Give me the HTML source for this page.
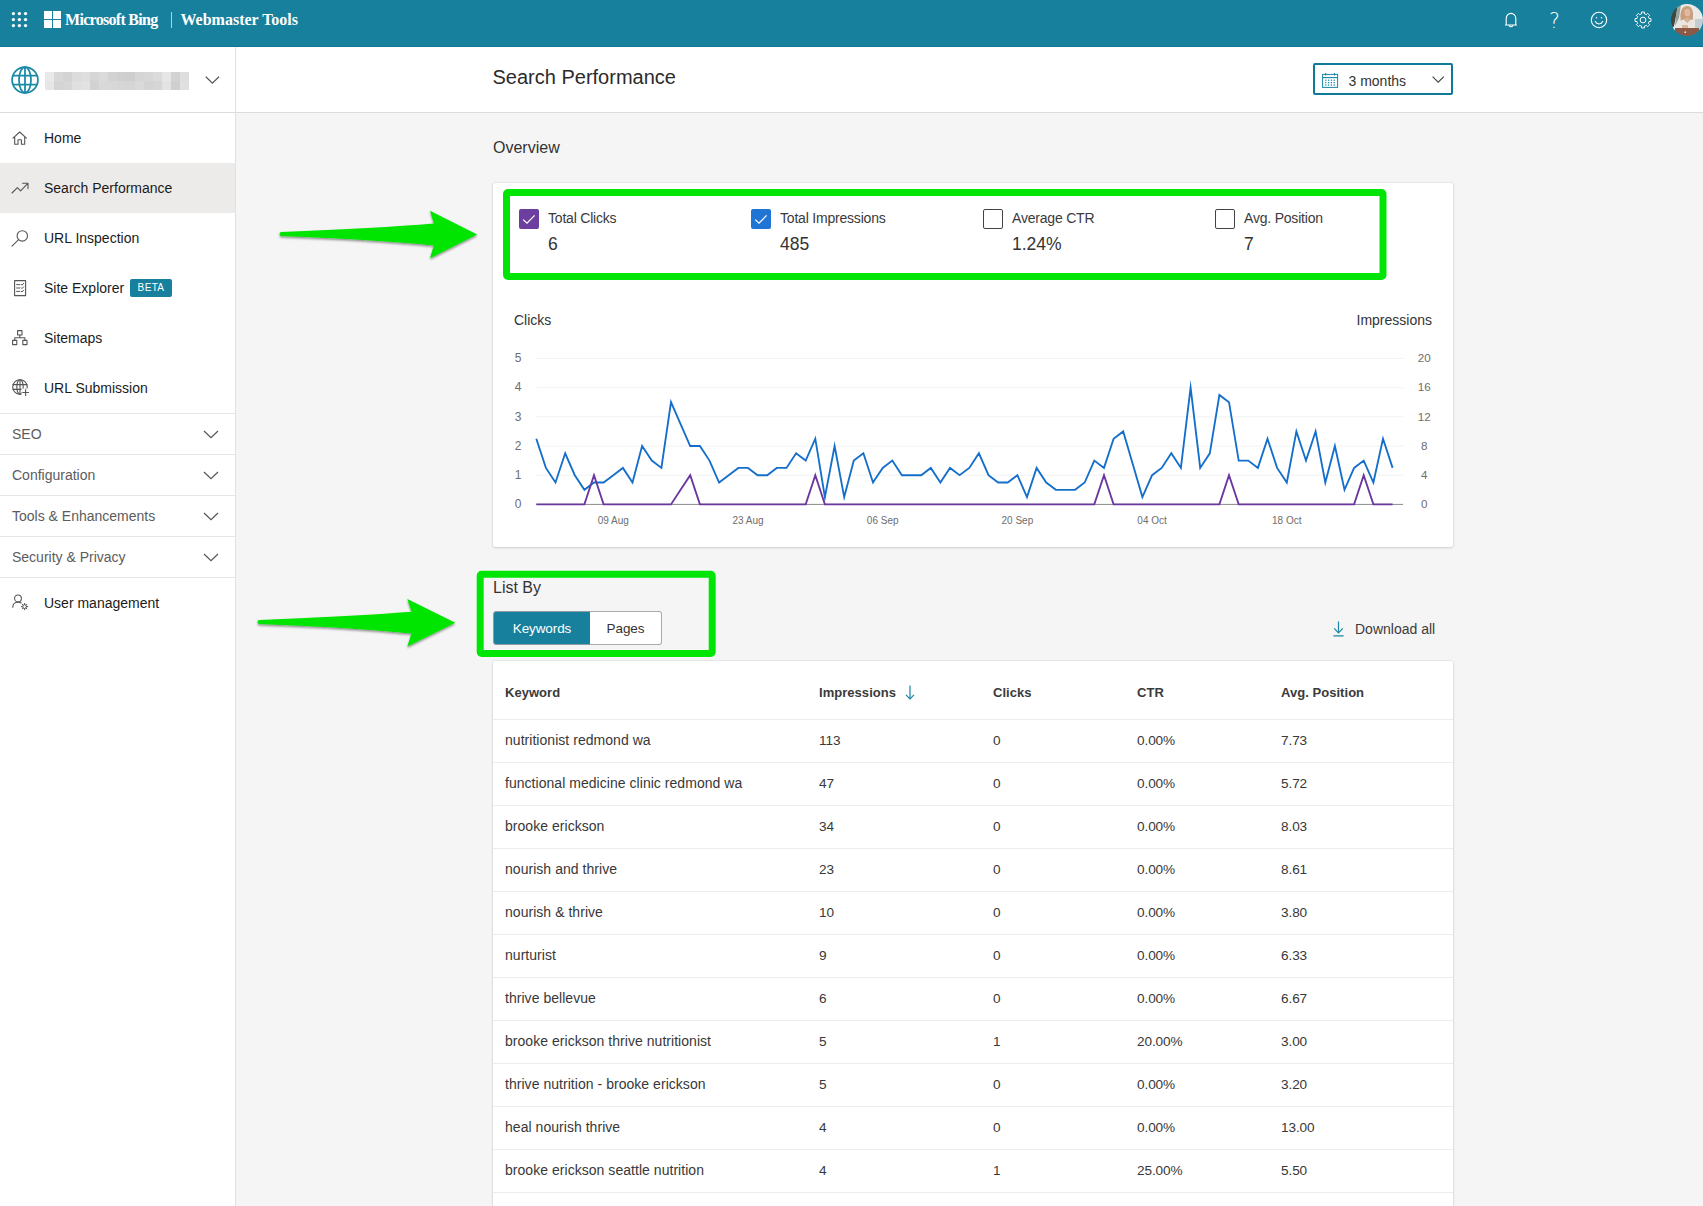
<!DOCTYPE html>
<html lang="en">
<head>
<meta charset="utf-8">
<title>Search Performance - Bing Webmaster Tools</title>
<style>
*{box-sizing:border-box;margin:0;padding:0}
html,body{width:1703px;height:1206px;overflow:hidden;background:#f5f5f5;font-family:"Liberation Sans",sans-serif;color:#222}
.abs{position:absolute}
#hdr{position:absolute;left:0;top:0;width:1703px;height:47px;background:#17809d;border-bottom:1px solid #0d7591}
#side{position:absolute;left:0;top:47px;width:236px;height:1159px;background:#fff;border-right:1px solid #e1e1e1}
#tbar{position:absolute;left:236px;top:47px;width:1467px;height:66px;background:#fff;border-bottom:1px solid #dcdcdc}
.card{position:absolute;background:#fff;border-radius:2px;box-shadow:0 0 0 1px rgba(0,0,0,.04),0 1px 3px rgba(0,0,0,.12)}

#hdr .t{position:absolute;top:-4px;height:47px;line-height:47px;color:#fff;font-family:"Liberation Serif",serif;font-weight:bold;font-size:16px;white-space:nowrap}
#hdr svg{position:absolute;overflow:visible}


#side{font-size:14px}
#side .sel{position:absolute;left:0;top:116px;width:235px;height:50px;background:#edebe9}
#side .ni{position:absolute;left:44px;height:50px;line-height:50px;color:#1b1b1b;white-space:nowrap}
#side .sec{position:absolute;left:12px;height:40px;line-height:40px;color:#5c5c5c;white-space:nowrap}
#side .hr{position:absolute;left:0;width:235px;height:1px;background:#e6e6e6}
#side svg{position:absolute;overflow:visible}
#side .beta{position:absolute;left:130px;top:232px;width:42px;height:18px;line-height:18px;background:#17809d;color:#fff;font-size:10px;text-align:center;border-radius:2px;letter-spacing:.35px}


#tbar .ttl{position:absolute;left:256.5px;top:15px;font-size:20px;line-height:30px;color:#2b2b2b;white-space:nowrap}
#dd{position:absolute;left:1077px;top:16px;width:140px;height:32px;border:2px solid #0f7a98;border-radius:2px;background:#fff}
#dd .tx{position:absolute;left:33.5px;top:0;height:28px;line-height:33px;font-size:14px;color:#333}
#dd svg{position:absolute;overflow:visible}
#main{position:absolute;left:0;top:0;width:1703px;height:1206px;pointer-events:none}
#main .h{position:absolute;left:493px;font-size:16px;line-height:20px;color:#333;white-space:nowrap}
.cb{position:absolute;width:20px;height:20px;border-radius:2px}
.cb.off{border:1px solid #444;background:#fff}
.ml{position:absolute;margin-top:.4px;font-size:14px;line-height:18px;color:#3a3a3a;white-space:nowrap;letter-spacing:-.2px}
.mv{position:absolute;font-size:17.5px;line-height:22px;color:#333;white-space:nowrap}
#chart{position:absolute;left:493px;top:300px;overflow:visible}
#chart text{font-family:"Liberation Sans",sans-serif}
.seg{position:absolute;top:611px;height:34px;line-height:34px;font-size:13.5px;text-align:center;border:1px solid #a9a9a9;letter-spacing:-.1px}
#tbl{position:absolute;left:493px;top:661px;width:960px;height:560px}
#tbl .r{position:absolute;left:0;width:960px;height:43px;border-top:1px solid #ececec;font-size:14px;line-height:40px;color:#383838}
#tbl .r .c2,#tbl .r .c3,#tbl .r .c4,#tbl .r .c5{font-size:13.6px;line-height:41px;letter-spacing:-.1px}
#tbl .hd{position:absolute;left:0;top:0;width:960px;height:58px;line-height:63px;font-size:13px;font-weight:bold;color:#3a3a3a}
#tbl span{position:absolute;top:0;white-space:nowrap;letter-spacing:.04px}
#tbl .c1{left:12px}#tbl .c2{left:326px}#tbl .c3{left:500px}#tbl .c4{left:644px}#tbl .c5{left:788px}

</style>
</head>
<body>
<div id="hdr">

<svg style="left:0;top:0" width="40" height="40"><g fill="#fff">
<circle cx="13.4" cy="13.6" r="1.65"/><circle cx="19.4" cy="13.6" r="1.65"/><circle cx="25.5" cy="13.6" r="1.65"/>
<circle cx="13.4" cy="19.6" r="1.65"/><circle cx="19.4" cy="19.6" r="1.65"/><circle cx="25.5" cy="19.6" r="1.65"/>
<circle cx="13.4" cy="25.6" r="1.65"/><circle cx="19.4" cy="25.6" r="1.65"/><circle cx="25.5" cy="25.6" r="1.65"/>
</g></svg>
<svg style="left:44px;top:11px" width="17" height="17"><g fill="#fff"><rect x="0" y="0" width="8" height="8"/><rect x="9" y="0" width="8" height="8"/><rect x="0" y="9" width="8" height="8"/><rect x="9" y="9" width="8" height="8"/></g></svg>
<div class="t" id="msb" style="left:65px;letter-spacing:-0.7px">Microsoft Bing</div>
<div style="position:absolute;left:171px;top:12px;width:1px;height:16px;background:rgba(255,255,255,.65)"></div>
<div class="t" id="wmt" style="left:180.5px">Webmaster Tools</div>
<!-- bell -->
<svg style="left:1503px;top:11px" width="16" height="18" fill="none" stroke="#fff" stroke-width="1.1" stroke-linecap="round" stroke-linejoin="round">
<path d="M3.2 13.9 V7.2 a4.8 4.8 0 0 1 9.6 0 V13.9 M2.5 14 H13.5"/><path d="M6.2 14.6 a1.9 1.7 0 0 0 3.6 0"/></svg>
<!-- help -->
<div id="qm" style="position:absolute;left:1545px;top:8px;width:19px;height:26px;line-height:26px;text-align:center;color:#fff;font-family:'DejaVu Sans','Liberation Sans',sans-serif;font-weight:200;font-size:20.5px">?</div>
<!-- smile -->
<svg style="left:1590px;top:11px" width="18" height="18" fill="none" stroke="#fff" stroke-width="1.1" stroke-linecap="round">
<circle cx="9" cy="9" r="7.7"/><path d="M5.3 10.6 a4.1 4.1 0 0 0 7.4 0"/><circle cx="6.5" cy="6.8" r=".75" fill="#fff" stroke="none"/><circle cx="11.5" cy="6.8" r=".75" fill="#fff" stroke="none"/></svg>
<!-- gear -->
<svg style="left:1633.7px;top:11.1px" width="18" height="18" viewBox="-9 -9 18 18" fill="none" stroke="#fff" stroke-width="1" stroke-linejoin="round">
<path d="M-1.49 -6.02 L-1.47 -7.86 A8.0 8.0 0 0 1 1.47 -7.86 L1.49 -6.02 A6.2 6.2 0 0 1 3.20 -5.31 L4.52 -6.60 A8.0 8.0 0 0 1 6.60 -4.52 L5.31 -3.20 A6.2 6.2 0 0 1 6.02 -1.49 L7.86 -1.47 A8.0 8.0 0 0 1 7.86 1.47 L6.02 1.49 A6.2 6.2 0 0 1 5.31 3.20 L6.60 4.52 A8.0 8.0 0 0 1 4.52 6.60 L3.20 5.31 A6.2 6.2 0 0 1 1.49 6.02 L1.47 7.86 A8.0 8.0 0 0 1 -1.47 7.86 L-1.49 6.02 A6.2 6.2 0 0 1 -3.20 5.31 L-4.52 6.60 A8.0 8.0 0 0 1 -6.60 4.52 L-5.31 3.20 A6.2 6.2 0 0 1 -6.02 1.49 L-7.86 1.47 A8.0 8.0 0 0 1 -7.86 -1.47 L-6.02 -1.49 A6.2 6.2 0 0 1 -5.31 -3.20 L-6.60 -4.52 A8.0 8.0 0 0 1 -4.52 -6.60 L-3.20 -5.31 A6.2 6.2 0 0 1 -1.49 -6.02Z"/><circle cx="0" cy="0" r="2.9"/></svg>
<!-- avatar -->
<svg style="left:1671px;top:4px" width="32" height="32" viewBox="0 0 32 32">
<defs><clipPath id="avc"><circle cx="16" cy="16" r="16"/></clipPath><filter id="avb" x="-10%" y="-10%" width="120%" height="120%"><feGaussianBlur stdDeviation=".55"/></filter></defs>
<g clip-path="url(#avc)"><g filter="url(#avb)"><rect width="32" height="32" fill="#e9e9e7"/>
<path d="M0 0H7L5 12L3 22L0 26Z" fill="#3c4a3f"/>
<path d="M5 12L7 0H10L8 14L4 22Z" fill="#9aa39a"/>
<path d="M9.5 14C9 6 12 2 16 2C20.5 2 22.5 6 22 13C22 16 21 18 20 19L11 19C10 18 9.5 16 9.5 14Z" fill="#c79f7c"/>
<ellipse cx="16.3" cy="8.6" rx="3" ry="3.9" fill="#e2b9a0"/>
<path d="M6 32C6 21 9 15.5 13 15.5L16.3 19L19.5 15.5C23.5 15.5 26 21 26 32Z" fill="#ece6e0"/>
<path d="M13.5 14L16.3 19L19 14Z" fill="#dcb199"/>
<rect x="24" y="15" width="8" height="11" fill="#c5ccd2"/>
<path d="M4 24H28V32H4Z" fill="#8b5a46"/>
<rect x="11" y="21" width="6" height="3" fill="#d9b6a0"/>
<circle cx="14.3" cy="28.2" r=".9" fill="#e6e0dc"/>
</g></g></svg>

</div>
<div id="side">

<!-- site selector -->
<svg style="left:11px;top:19px" width="28" height="28" viewBox="-14 -14 28 28" fill="none" stroke="#1a8aa6" stroke-width="1.75">
<circle r="12.9"/><ellipse rx="6" ry="12.9"/><path d="M0 -12.9V12.9M-12.1 -4.5H12.1M-12.1 4.5H12.1"/></svg>
<svg style="left:45px;top:25px" width="145" height="18" shape-rendering="crispEdges">
<rect x="0" y="0" width="9.1" height="9" fill="#e9e9e9"/><rect x="0" y="9" width="9.1" height="9" fill="#e6e6e6"/><rect x="9" y="0" width="9.1" height="9" fill="#d8d8d8"/><rect x="9" y="9" width="9.1" height="9" fill="#d4d4d4"/><rect x="18" y="0" width="9.1" height="9" fill="#d3d3d3"/><rect x="18" y="9" width="9.1" height="9" fill="#d6d6d6"/><rect x="27" y="0" width="9.1" height="9" fill="#dcdcdc"/><rect x="27" y="9" width="9.1" height="9" fill="#dfdfdf"/><rect x="36" y="0" width="9.1" height="9" fill="#dedede"/><rect x="36" y="9" width="9.1" height="9" fill="#e2e2e2"/><rect x="45" y="0" width="9.1" height="9" fill="#d6d6d6"/><rect x="45" y="9" width="9.1" height="9" fill="#d2d2d2"/><rect x="54" y="0" width="9.1" height="9" fill="#dadada"/><rect x="54" y="9" width="9.1" height="9" fill="#d9d9d9"/><rect x="63" y="0" width="9.1" height="9" fill="#d2d2d2"/><rect x="63" y="9" width="9.1" height="9" fill="#d8d8d8"/><rect x="72" y="0" width="9.1" height="9" fill="#cfcfcf"/><rect x="72" y="9" width="9.1" height="9" fill="#d6d6d6"/><rect x="81" y="0" width="9.1" height="9" fill="#cecece"/><rect x="81" y="9" width="9.1" height="9" fill="#d5d5d5"/><rect x="90" y="0" width="9.1" height="9" fill="#d5d5d5"/><rect x="90" y="9" width="9.1" height="9" fill="#d9d9d9"/><rect x="99" y="0" width="9.1" height="9" fill="#d7d7d7"/><rect x="99" y="9" width="9.1" height="9" fill="#d4d4d4"/><rect x="108" y="0" width="9.1" height="9" fill="#dbdbdb"/><rect x="108" y="9" width="9.1" height="9" fill="#d6d6d6"/><rect x="117" y="0" width="9.1" height="9" fill="#e6e6e6"/><rect x="117" y="9" width="9.1" height="9" fill="#e3e3e3"/><rect x="126" y="0" width="9.1" height="9" fill="#d2d2d2"/><rect x="126" y="9" width="9.1" height="9" fill="#cfcfcf"/><rect x="135" y="0" width="9.1" height="9" fill="#dedede"/><rect x="135" y="9" width="9.1" height="9" fill="#e0e0e0"/>
</svg>
<svg style="left:205px;top:29px" width="15" height="9" fill="none" stroke="#555" stroke-width="1.2"><path d="M.8 .8 L7.4 7.2 L14 .8"/></svg>
<div class="hr" style="top:65px;background:#dcdcdc"></div>

<div class="sel"></div>
<!-- home -->
<svg style="left:12px;top:84px" width="16" height="15" fill="none" stroke="#555" stroke-width="1.1" stroke-linejoin="round" stroke-linecap="round"><path d="M1 7.2 L7.7 1 L14.4 7.2 M2.7 6 V13.3 H6 V8.8 H9.4 V13.3 H12.7 V6"/></svg>
<div class="ni" style="top:66px">Home</div>
<!-- trend -->
<svg style="left:11px;top:135px" width="18" height="13" fill="none" stroke="#555" stroke-width="1.1" stroke-linejoin="round" stroke-linecap="round"><path d="M1 11 L6.4 5.6 L9.6 8.8 L16.6 1.6 M11.6 1.2 H17 V6.6"/></svg>
<div class="ni" style="top:116px">Search Performance</div>
<!-- magnifier -->
<svg style="left:11px;top:183px" width="18" height="17" fill="none" stroke="#555" stroke-width="1.1" stroke-linejoin="round" stroke-linecap="round"><circle cx="11.3" cy="5.9" r="5.2"/><path d="M7.6 9.7 L1 16.2"/></svg>
<div class="ni" style="top:166px">URL Inspection</div>
<!-- site explorer doc -->
<svg style="left:14px;top:233px" width="13" height="17" fill="none" stroke="#555" stroke-width="1.1" stroke-linejoin="round" stroke-linecap="round" stroke-linecap="butt"><rect x=".6" y=".6" width="11" height="15"/><path d="M2.6 4.6H5.8M2.6 8H5.8M2.6 11.4H5.8M7.2 4.4L8 5.2L9.6 3.4M7.2 7.8L8 8.6L9.6 6.8M7.2 11.2L8 12L9.6 10.2" stroke-width="1"/></svg>
<div class="ni" style="top:216px">Site Explorer</div>
<div class="beta">BETA</div>
<!-- sitemaps -->
<svg style="left:12px;top:283px" width="16" height="16" fill="none" stroke="#555" stroke-width="1.1" stroke-linejoin="round" stroke-linecap="round" stroke-linejoin="miter"><rect x="5.6" y=".6" width="4.4" height="4.4"/><rect x=".6" y="10.4" width="4.2" height="4.2"/><rect x="10.8" y="10.4" width="4.2" height="4.2"/><path d="M7.8 5V7.8M2.7 10.4V7.8H12.9V10.4"/></svg>
<div class="ni" style="top:266px">Sitemaps</div>
<!-- url submission -->
<svg style="left:12px;top:332px" width="17" height="17" viewBox="-8 -8 17 17" fill="none" stroke="#555" stroke-width="1.1" stroke-linejoin="round" stroke-linecap="round"><circle r="7.3"/><ellipse rx="3.2" ry="7.3"/><path d="M-7 -2.4H7M-7 2.4H7M0 -7.3V7.3"/><rect x="1.5" y="1.5" width="8" height="8" fill="#fff" stroke="none"/><path d="M5.6 2.6V8.4M2.7 5.5H8.5"/></svg>
<div class="ni" style="top:316px">URL Submission</div>

<div class="hr" style="top:366px"></div>
<div class="sec" style="top:367px">SEO</div><svg style="left:203px;top:383px" width="16" height="9" fill="none" stroke="#555" stroke-width="1.2"><path d="M1 1 L8 7.6 L15 1"/></svg>
<div class="hr" style="top:407px"></div>
<div class="sec" style="top:408px">Configuration</div><svg style="left:203px;top:424px" width="16" height="9" fill="none" stroke="#555" stroke-width="1.2"><path d="M1 1 L8 7.6 L15 1"/></svg>
<div class="hr" style="top:448px"></div>
<div class="sec" style="top:449px">Tools &amp; Enhancements</div><svg style="left:203px;top:465px" width="16" height="9" fill="none" stroke="#555" stroke-width="1.2"><path d="M1 1 L8 7.6 L15 1"/></svg>
<div class="hr" style="top:489px"></div>
<div class="sec" style="top:490px">Security &amp; Privacy</div><svg style="left:203px;top:506px" width="16" height="9" fill="none" stroke="#555" stroke-width="1.2"><path d="M1 1 L8 7.6 L15 1"/></svg>
<div class="hr" style="top:530px"></div>
<!-- user mgmt -->
<svg style="left:12px;top:547px" width="17" height="17" fill="none" stroke="#555" stroke-width="1.1" stroke-linejoin="round" stroke-linecap="round"><circle cx="6" cy="4.4" r="3.4"/><path d="M.8 13.2 C.8 9.8 3 8.2 6 8.2 C7.4 8.2 8.4 8.5 9.2 9"/><g stroke-width="1"><circle cx="12.6" cy="12.6" r="1.9"/><path d="M12.6 9.4V10.4M12.6 14.8V15.8M9.4 12.6H10.4M14.8 12.6H15.8M10.3 10.3L11 11M14.2 14.2L14.9 14.9M14.9 10.3L14.2 11M11 14.2L10.3 14.9"/></g></svg>
<div class="ni" style="top:531px">User management</div>

</div>
<div id="tbar">

<div class="ttl">Search Performance</div>
<div id="dd">
<svg style="left:7px;top:7px" width="17" height="16" fill="none" stroke="#1a87a4" stroke-width="1">
<rect x=".6" y="2.4" width="15" height="13"/><path d="M.6 5.6H15.6" stroke-width="1.1"/><path d="M3.7 .9V3.6M12.5 .9V3.6" stroke-width="1.1"/>
<g fill="#1a87a4" stroke="none"><rect x="3.2" y="7.6" width="1.25" height="1.25"/><rect x="6.0" y="7.6" width="1.25" height="1.25"/><rect x="8.8" y="7.6" width="1.25" height="1.25"/><rect x="11.6" y="7.6" width="1.25" height="1.25"/><rect x="3.2" y="10.0" width="1.25" height="1.25"/><rect x="6.0" y="10.0" width="1.25" height="1.25"/><rect x="8.8" y="10.0" width="1.25" height="1.25"/><rect x="11.6" y="10.0" width="1.25" height="1.25"/><rect x="3.2" y="12.4" width="1.25" height="1.25"/><rect x="6.0" y="12.4" width="1.25" height="1.25"/><rect x="8.8" y="12.4" width="1.25" height="1.25"/><rect x="11.6" y="12.4" width="1.25" height="1.25"/></g></svg>
<div class="tx">3 months</div>
<svg style="left:117px;top:11px" width="13" height="8" fill="none" stroke="#444" stroke-width="1.15"><path d="M.6 .6 L6.2 6.1 L11.8 .6"/></svg>
</div>

</div>
<div id="main">

<div class="h" style="top:138px">Overview</div>
<div class="card" style="left:493px;top:183px;width:960px;height:364px"></div>

<div class="cb" style="left:519px;top:209px;background:#6b3ea0"><svg width="20" height="20" fill="none" stroke="#fff" stroke-width="1.3" style="position:absolute;left:0;top:0"><path d="M4.2 10.6 L8 14.2 L15.6 6.4"/></svg></div>
<div class="ml" style="left:548px;top:209px">Total Clicks</div><div class="mv" style="left:548px;top:233px">6</div>
<div class="cb" style="left:751px;top:209px;background:#2074d4"><svg width="20" height="20" fill="none" stroke="#fff" stroke-width="1.3" style="position:absolute;left:0;top:0"><path d="M4.2 10.6 L8 14.2 L15.6 6.4"/></svg></div>
<div class="ml" style="left:780px;top:209px">Total Impressions</div><div class="mv" style="left:780px;top:233px">485</div>
<div class="cb off" style="left:983px;top:209px"></div>
<div class="ml" style="left:1012px;top:209px">Average CTR</div><div class="mv" style="left:1012px;top:233px">1.24%</div>
<div class="cb off" style="left:1215px;top:209px"></div>
<div class="ml" style="left:1244px;top:209px">Avg. Position</div><div class="mv" style="left:1244px;top:233px">7</div>

<svg id="chart" width="960" height="247">
<text x="21" y="25" font-size="14" fill="#333">Clicks</text>
<text x="939" y="25" font-size="14" fill="#333" text-anchor="end">Impressions</text>
<line x1="43.5" x2="910" y1="175.2" y2="175.2" stroke="#f2f2f2" stroke-width="1"/><line x1="43.5" x2="910" y1="146.0" y2="146.0" stroke="#f2f2f2" stroke-width="1"/><line x1="43.5" x2="910" y1="116.8" y2="116.8" stroke="#f2f2f2" stroke-width="1"/><line x1="43.5" x2="910" y1="87.6" y2="87.6" stroke="#f2f2f2" stroke-width="1"/><line x1="43.5" x2="910" y1="58.4" y2="58.4" stroke="#f2f2f2" stroke-width="1"/><line x1="43.5" x2="910" y1="204.4" y2="204.4" stroke="#8a8a8a" stroke-width="1"/><text x="25" y="208.1" font-size="12" fill="#6e6e6e" text-anchor="middle">0</text><text x="931.3" y="208.1" font-size="11.6" fill="#6e6e6e" text-anchor="middle">0</text><text x="25" y="178.9" font-size="12" fill="#6e6e6e" text-anchor="middle">1</text><text x="931.3" y="178.9" font-size="11.6" fill="#6e6e6e" text-anchor="middle">4</text><text x="25" y="149.7" font-size="12" fill="#6e6e6e" text-anchor="middle">2</text><text x="931.3" y="149.7" font-size="11.6" fill="#6e6e6e" text-anchor="middle">8</text><text x="25" y="120.5" font-size="12" fill="#6e6e6e" text-anchor="middle">3</text><text x="931.3" y="120.5" font-size="11.6" fill="#6e6e6e" text-anchor="middle">12</text><text x="25" y="91.3" font-size="12" fill="#6e6e6e" text-anchor="middle">4</text><text x="931.3" y="91.3" font-size="11.6" fill="#6e6e6e" text-anchor="middle">16</text><text x="25" y="62.1" font-size="12" fill="#6e6e6e" text-anchor="middle">5</text><text x="931.3" y="62.1" font-size="11.6" fill="#6e6e6e" text-anchor="middle">20</text><text x="120.3" y="223.8" font-size="10" fill="#6e6e6e" text-anchor="middle">09 Aug</text><text x="255.0" y="223.8" font-size="10" fill="#6e6e6e" text-anchor="middle">23 Aug</text><text x="389.7" y="223.8" font-size="10" fill="#6e6e6e" text-anchor="middle">06 Sep</text><text x="524.4" y="223.8" font-size="10" fill="#6e6e6e" text-anchor="middle">20 Sep</text><text x="659.1" y="223.8" font-size="10" fill="#6e6e6e" text-anchor="middle">04 Oct</text><text x="793.8" y="223.8" font-size="10" fill="#6e6e6e" text-anchor="middle">18 Oct</text>
<polyline points="43.3,138.7 52.9,167.9 62.5,182.5 72.2,153.3 81.8,175.2 91.4,189.8 101.0,182.5 110.6,182.5 120.3,175.2 129.9,167.9 139.5,182.5 149.1,146.0 158.8,160.6 168.4,167.9 178.0,102.2 187.6,124.1 197.2,146.0 206.9,146.0 216.5,160.6 226.1,182.5 235.7,175.2 245.3,167.9 255.0,167.9 264.6,175.2 274.2,175.2 283.8,167.9 293.5,167.9 303.1,153.3 312.7,160.6 322.3,138.7 331.9,197.1 341.6,146.0 351.2,197.1 360.8,160.6 370.4,153.3 380.0,182.5 389.7,167.9 399.3,160.6 408.9,175.2 418.5,175.2 428.2,175.2 437.8,167.9 447.4,182.5 457.0,167.9 466.6,175.2 476.3,167.9 485.9,153.3 495.5,175.2 505.1,182.5 514.7,182.5 524.4,175.2 534.0,197.1 543.6,167.9 553.2,182.5 562.9,189.8 572.5,189.8 582.1,189.8 591.7,182.5 601.3,160.6 611.0,167.9 620.6,138.7 630.2,131.4 639.8,164.2 649.4,197.1 659.1,175.2 668.7,167.9 678.3,153.3 687.9,167.9 697.6,87.6 707.2,167.9 716.8,153.3 726.4,94.9 736.0,102.2 745.7,160.6 755.3,160.6 764.9,167.9 774.5,138.7 784.1,167.9 793.8,182.5 803.4,131.4 813.0,160.6 822.6,131.4 832.3,182.5 841.9,146.0 851.5,189.8 861.1,167.9 870.7,160.6 880.4,182.5 890.0,138.7 899.6,167.9" fill="none" stroke="#146fcb" stroke-width="1.85" stroke-linejoin="miter" stroke-miterlimit="10"/>
<polyline points="43.3,204.4 52.9,204.4 62.5,204.4 72.2,204.4 81.8,204.4 91.4,204.4 101.0,175.2 110.6,204.4 120.3,204.4 129.9,204.4 139.5,204.4 149.1,204.4 158.8,204.4 168.4,204.4 178.0,204.4 187.6,189.8 197.2,175.2 206.9,204.4 216.5,204.4 226.1,204.4 235.7,204.4 245.3,204.4 255.0,204.4 264.6,204.4 274.2,204.4 283.8,204.4 293.5,204.4 303.1,204.4 312.7,204.4 322.3,175.2 331.9,204.4 341.6,204.4 351.2,204.4 360.8,204.4 370.4,204.4 380.0,204.4 389.7,204.4 399.3,204.4 408.9,204.4 418.5,204.4 428.2,204.4 437.8,204.4 447.4,204.4 457.0,204.4 466.6,204.4 476.3,204.4 485.9,204.4 495.5,204.4 505.1,204.4 514.7,204.4 524.4,204.4 534.0,204.4 543.6,204.4 553.2,204.4 562.9,204.4 572.5,204.4 582.1,204.4 591.7,204.4 601.3,204.4 611.0,175.2 620.6,204.4 630.2,204.4 639.8,204.4 649.4,204.4 659.1,204.4 668.7,204.4 678.3,204.4 687.9,204.4 697.6,204.4 707.2,204.4 716.8,204.4 726.4,204.4 736.0,175.2 745.7,204.4 755.3,204.4 764.9,204.4 774.5,204.4 784.1,204.4 793.8,204.4 803.4,204.4 813.0,204.4 822.6,204.4 832.3,204.4 841.9,204.4 851.5,204.4 861.1,204.4 870.7,175.2 880.4,204.4 890.0,204.4 899.6,204.4" fill="none" stroke="#6a37a0" stroke-width="1.85" stroke-linejoin="miter" stroke-miterlimit="10"/>
</svg>
<div class="h" style="top:578px">List By</div>
<div class="seg" style="left:493px;width:98px;background:#17809d;border-color:#8f9da2;color:#fff;border-radius:3px 0 0 3px">Keywords</div>
<div class="seg" style="left:590px;width:72px;background:#fff;color:#333;border-radius:0 3px 3px 0;border-left:none">Pages</div>
<svg style="position:absolute;left:1332px;top:620.5px;overflow:visible" width="13" height="16" fill="none" stroke="#1a87a4" stroke-width="1.2"><path d="M6.5 .5V11.6M2.2 7.4L6.5 11.8L10.8 7.4M1.4 14.8H11.6"/></svg>
<div style="position:absolute;left:1355px;top:618.6px;font-size:14px;line-height:20px;color:#3c3c3c;white-space:nowrap">Download all</div>
<div class="card" id="tbl">
<div class="hd"><span class="c1">Keyword</span><span class="c2">Impressions</span><span class="c3">Clicks</span><span class="c4">CTR</span><span class="c5">Avg. Position</span></div>
<svg style="position:absolute;left:412px;top:24px;overflow:visible" width="10" height="15" fill="none" stroke="#1a87a4" stroke-width="1.2"><path d="M5 .5V13.6M1 9.8L5 13.8L9 9.8"/></svg>
<div class="r" style="top:58px"><span class="c1">nutritionist redmond wa</span><span class="c2">113</span><span class="c3">0</span><span class="c4">0.00%</span><span class="c5">7.73</span></div>
<div class="r" style="top:101px"><span class="c1">functional medicine clinic redmond wa</span><span class="c2">47</span><span class="c3">0</span><span class="c4">0.00%</span><span class="c5">5.72</span></div>
<div class="r" style="top:144px"><span class="c1">brooke erickson</span><span class="c2">34</span><span class="c3">0</span><span class="c4">0.00%</span><span class="c5">8.03</span></div>
<div class="r" style="top:187px"><span class="c1">nourish and thrive</span><span class="c2">23</span><span class="c3">0</span><span class="c4">0.00%</span><span class="c5">8.61</span></div>
<div class="r" style="top:230px"><span class="c1">nourish &amp; thrive</span><span class="c2">10</span><span class="c3">0</span><span class="c4">0.00%</span><span class="c5">3.80</span></div>
<div class="r" style="top:273px"><span class="c1">nurturist</span><span class="c2">9</span><span class="c3">0</span><span class="c4">0.00%</span><span class="c5">6.33</span></div>
<div class="r" style="top:316px"><span class="c1">thrive bellevue</span><span class="c2">6</span><span class="c3">0</span><span class="c4">0.00%</span><span class="c5">6.67</span></div>
<div class="r" style="top:359px"><span class="c1">brooke erickson thrive nutritionist</span><span class="c2">5</span><span class="c3">1</span><span class="c4">20.00%</span><span class="c5">3.00</span></div>
<div class="r" style="top:402px"><span class="c1">thrive nutrition - brooke erickson</span><span class="c2">5</span><span class="c3">0</span><span class="c4">0.00%</span><span class="c5">3.20</span></div>
<div class="r" style="top:445px"><span class="c1">heal nourish thrive</span><span class="c2">4</span><span class="c3">0</span><span class="c4">0.00%</span><span class="c5">13.00</span></div>
<div class="r" style="top:488px"><span class="c1">brooke erickson seattle nutrition</span><span class="c2">4</span><span class="c3">1</span><span class="c4">25.00%</span><span class="c5">5.50</span></div>
<div class="r" style="top:531px"><span class="c1">&nbsp;</span><span class="c2"></span><span class="c3"></span><span class="c4"></span><span class="c5"></span></div>

</div>

</div>

<svg style="position:absolute;left:0;top:0;overflow:visible;pointer-events:none" width="1703" height="1206">
<defs><filter id="ash" x="-10%" y="-30%" width="120%" height="160%"><feDropShadow dx="0" dy="1.5" stdDeviation="1.2" flood-color="#000" flood-opacity=".45"/></filter></defs>
<path d="M281.5 232.0 Q377.6 228.3 433.8 223.6 L430.0 210.8 L477.2 234.5 L430.0 258.2 L433.8 245.4 Q377.6 239.7 281.5 236.0 A2.0 2.0 0 0 1 281.5 232.0Z" fill="#00e506" filter="url(#ash)"/>
<path d="M259.5 620.0 Q355.5 616.3 411.5 611.8 L407.3 599.0 L455.3 622.7 L407.3 646.4 L411.5 633.6 Q355.5 627.7 259.5 624.0 A2.0 2.0 0 0 1 259.5 620.0Z" fill="#00e506" filter="url(#ash)"/>
<rect x="506.5" y="192.5" width="876.5" height="84" rx="1.5" fill="none" stroke="#00e506" stroke-width="7"/>
<rect x="480.2" y="574.2" width="232" height="79.3" rx="1.5" fill="none" stroke="#00e506" stroke-width="7"/>
</svg>

</body>
</html>
